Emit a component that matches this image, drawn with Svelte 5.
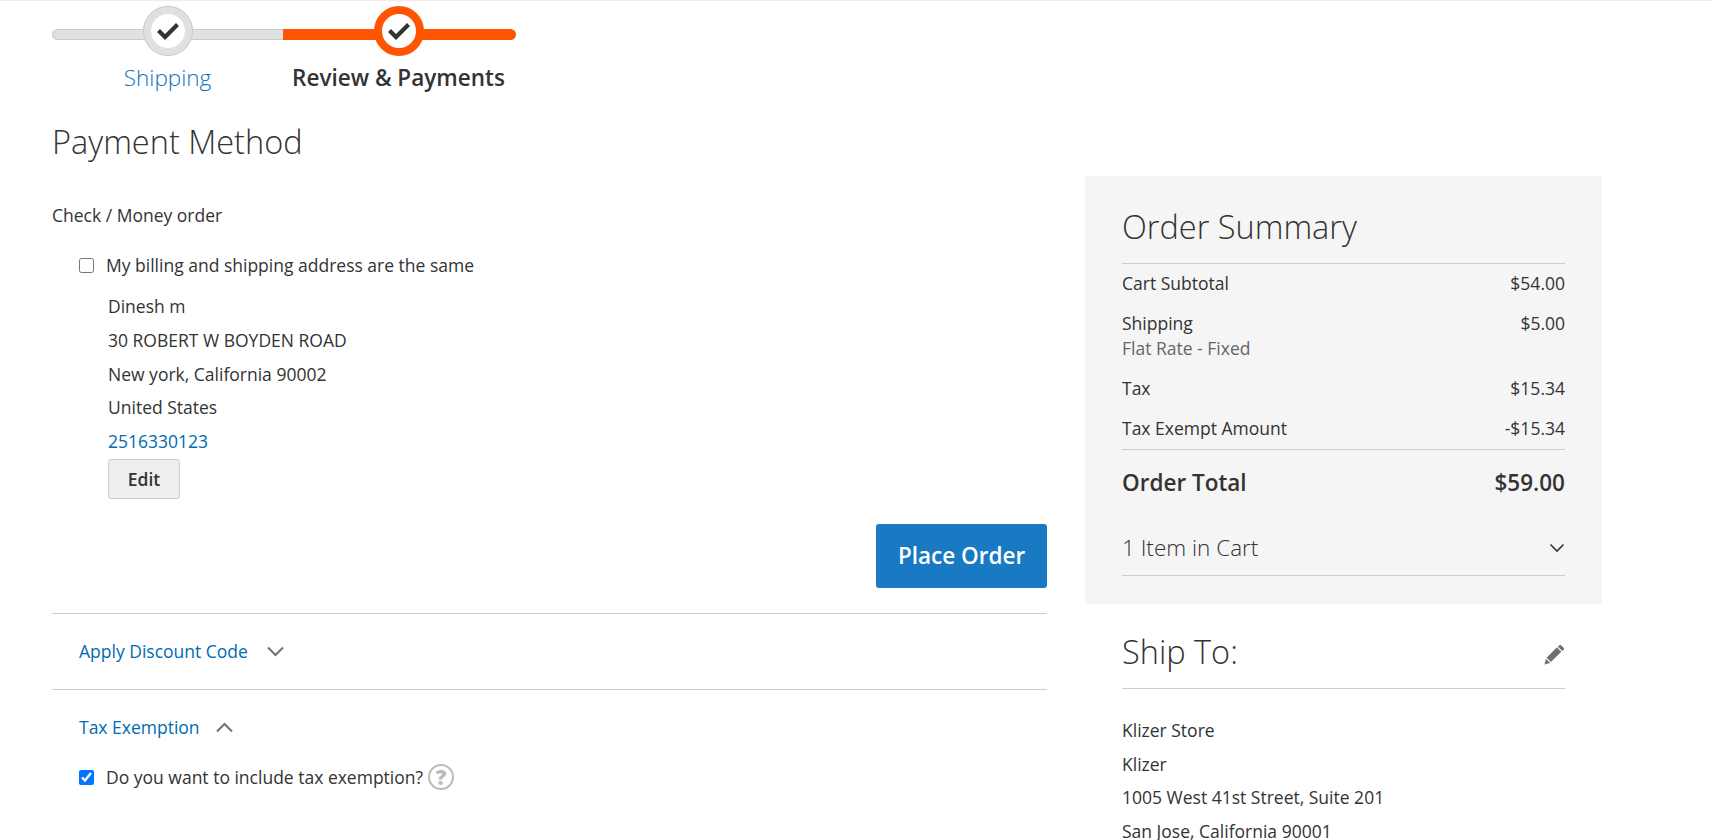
<script>
	const totals = [
		{ label: 'Cart Subtotal', value: '$54.00' },
		{ label: 'Shipping', sub: 'Flat Rate - Fixed', value: '$5.00' },
		{ label: 'Tax', value: '$15.34' },
		{ label: 'Tax Exempt Amount', value: '-$15.34' }
	];
	const billing = ['Dinesh m', '30 ROBERT W BOYDEN ROAD', 'New york, California 90002', 'United States'];
	const shipFrom = ['Klizer Store', 'Klizer', '1005 West 41st Street, Suite 201', 'San Jose, California 90001'];
	const check = 'M0 10 3 7 8 12 19 1 22 4 8 18Z';
</script>

<div class="page">
	<main>
		<ul class="progress">
			<li class="step done">
				<span class="bar"></span>
				<span class="dot"><svg viewBox="0 0 22 19" aria-hidden="true"><path d={check} /></svg></span>
				<a href="#shipping">Shipping</a>
			</li>
			<li class="step active">
				<span class="bar"></span>
				<span class="dot"><svg viewBox="0 0 22 19" aria-hidden="true"><path d={check} /></svg></span>
				<b>Review &amp; Payments</b>
			</li>
		</ul>

		<h1>Payment Method</h1>
		<p class="method">Check / Money order</p>

		<label class="check same">
			<input type="checkbox" />
			My billing and shipping address are the same
		</label>

		<div class="address">
			{#each billing as line}
				<div>{line}</div>
			{/each}
			<div><a href="#tel">2516330123</a></div>
			<button class="edit">Edit</button>
		</div>

		<div class="actions">
			<button class="place">Place Order</button>
		</div>

		<section class="fold discount">
			<a href="#discount">Apply Discount Code</a>
			<svg class="chev" viewBox="0 0 18 11" aria-hidden="true"><path d="M1.5 1.5 9 9l7.5-7.5" /></svg>
		</section>

		<section class="fold tax">
			<a href="#tax">Tax Exemption</a>
			<svg class="chev" viewBox="0 0 18 11" aria-hidden="true"><path d="M1.5 9.5 9 2l7.5 7.5" /></svg>
		</section>

		<label class="check exempt">
			<input type="checkbox" checked />
			Do you want to include tax exemption?
			<span class="help">?</span>
		</label>
	</main>

	<aside>
		<div class="summary">
			<h2>Order Summary</h2>
			<div class="totals">
				{#each totals as row}
					<div class="row">
						<div>
							{row.label}
							{#if row.sub}<div class="sub">{row.sub}</div>{/if}
						</div>
						<div>{row.value}</div>
					</div>
				{/each}
			</div>
			<div class="grand">
				<span>Order Total</span>
				<span>$59.00</span>
			</div>
			<div class="items">
				<span>1 Item in Cart</span>
				<svg viewBox="0 0 16 10" aria-hidden="true"><path d="M1.5 1.5 8 8l6.5-6.5" /></svg>
			</div>
		</div>

		<div class="ship">
			<div class="ship-head">
				<h2>Ship To:</h2>
				<svg class="pencil" viewBox="0 0 20 20" aria-hidden="true">
					<path d="M14.6 1.2a1.2 1.2 0 0 1 1.7 0l2.5 2.5a1.2 1.2 0 0 1 0 1.7l-1.3 1.3-4.2-4.2ZM12.3 3.1l4.2 4.2L6.6 17.2l-4.2-4.2ZM1.8 14l4.1 4.1-5.4 1.4Z" />
				</svg>
			</div>
			<div class="from">
				{#each shipFrom as line}
					<div>{line}</div>
				{/each}
			</div>
		</div>
	</aside>
</div>

<style>
	:global(body) {
		background: #fff;
	}

	.page {
		height: 840px;
		overflow: hidden;
		box-sizing: border-box;
		border-top: 1px solid #fbe6e6;
		padding-left: 52px;
		display: grid;
		grid-template-columns: 995px 517px;
		column-gap: 38px;
		font-family: 'Open Sans', sans-serif;
		font-size: 17.5px;
		color: #333;
	}

	a {
		color: #006bb4;
		text-decoration: none;
	}

	.progress {
		list-style: none;
		margin: 0;
		padding: 0;
		width: 464px;
		display: grid;
		grid-template-columns: 231px 233px;
	}

	.step {
		position: relative;
		height: 99px;
		text-align: center;
		font-size: 22.5px;
	}

	.step a,
	.step b {
		position: absolute;
		top: 60px;
		line-height: 34px;
		white-space: nowrap;
		left: 0;
		right: 0;
	}

	.active b {
		left: -1px;
		right: 1px;
	}

	.step a {
		font-weight: 300;
		color: #1272bd;
	}

	.step b {
		font-weight: 600;
	}

	.bar {
		position: absolute;
		left: 0;
		right: 0;
		top: 28px;
		height: 11px;
		box-sizing: border-box;
		background: #e0e0e0;
		border: 1px solid #ccc;
		border-right: 0;
		border-radius: 6px 0 0 6px;
	}

	.active .bar {
		background: #ff5501;
		border: 0;
		border-radius: 0 6px 6px 0;
	}

	.dot {
		position: absolute;
		left: 116px;
		top: 5px;
		width: 50px;
		height: 50px;
		margin-left: -25px;
		box-sizing: border-box;
		border-radius: 50%;
		background: #fff;
		border: 8px solid #e0e0e0;
		display: flex;
		align-items: center;
		justify-content: center;
	}

	.done .dot {
		outline: 1px solid #ccc;
		outline-offset: -1px;
	}

	.active .dot {
		border-color: #ff5501;
	}

	.dot svg {
		width: 22px;
		height: 19px;
		fill: #333;
	}

	h1,
	h2 {
		font-weight: 300;
		margin: 0;
	}

	h1 {
		font-size: 32.5px;
		line-height: 44px;
		margin-top: 20px;
	}

	.method {
		margin: 40px 0 0;
		line-height: 22px;
	}

	.check {
		display: flex;
		align-items: center;
		padding-left: 27px;
	}

	.check input {
		width: 15px;
		height: 15px;
		margin: 0 12px 0 0;
	}

	.same {
		margin-top: 28px;
		line-height: 22px;
	}

	.address {
		margin: 14px 0 0 56px;
		line-height: 33.8px;
	}

	.edit {
		display: block;
		width: 72px;
		height: 40px;
		background: #eee;
		border: 1px solid #ccc;
		border-radius: 3px;
		color: #333;
		font: 600 17.5px 'Open Sans', sans-serif;
	}

	.actions {
		display: flex;
		justify-content: flex-end;
		margin-top: 25px;
	}

	.place {
		width: 171px;
		height: 64px;
		background: #1979c3;
		border: 0;
		border-radius: 3px;
		color: #fff;
		font: 600 22.5px 'Open Sans', sans-serif;
	}

	.fold {
		display: flex;
		align-items: flex-start;
		box-sizing: border-box;
		padding: 25.5px 0 0 27px;
		border-top: 1px solid #ccc;
		height: 76px;
		line-height: 24.5px;
	}

	.discount {
		margin-top: 25px;
	}

	.tax {
		height: 71.5px;
	}

	.chev {
		width: 19px;
		height: 11px;
		margin: 7px 0 0 18px;
		fill: none;
		stroke: #707070;
		stroke-width: 2;
	}

	.tax .chev {
		margin-left: 15px;
	}

	.exempt {
		margin-top: 2px;
		line-height: 30px;
	}

	.help {
		width: 22px;
		height: 22px;
		margin-left: 5px;
		border: 2px solid #bbb;
		border-radius: 50%;
		color: #bbb;
		font-weight: 800;
		font-size: 21px;
		line-height: 22px;
		text-align: center;
	}

	aside {
		padding-top: 175px;
	}

	.summary {
		background: #f5f5f5;
		padding: 29px 37px 28px;
		height: 428px;
		box-sizing: border-box;
	}

	.summary h2,
	.ship h2 {
		font-size: 32.5px;
		line-height: 44px;
	}

	.totals {
		margin-top: 14px;
		border-top: 1px solid #ccc;
		border-bottom: 1px solid #ccc;
	}

	.row {
		display: flex;
		justify-content: space-between;
		padding: 8px 0;
		line-height: 24.5px;
	}

	.row:first-child {
		padding-top: 6.5px;
	}

	.sub {
		color: #666;
		line-height: 24px;
	}

	.grand {
		display: flex;
		justify-content: space-between;
		margin-top: 17px;
		font-size: 22.5px;
		font-weight: 600;
		line-height: 32px;
	}

	.items {
		display: flex;
		justify-content: space-between;
		align-items: center;
		margin-top: 33px;
		padding-bottom: 11px;
		border-bottom: 1px solid #ccc;
		font-size: 22.5px;
		font-weight: 300;
		line-height: 32px;
	}

	.items svg {
		width: 16px;
		height: 10px;
		fill: none;
		stroke: #333;
		stroke-width: 1.6;
	}

	.ship {
		padding: 26px 37px 0;
	}

	.ship-head {
		display: flex;
		justify-content: space-between;
		align-items: center;
		padding-bottom: 14px;
		border-bottom: 1px solid #ccc;
	}

	.pencil {
		width: 21px;
		height: 21px;
		fill: #707070;
		margin-top: 5px;
	}

	.from {
		margin-top: 25px;
		line-height: 33.5px;
	}
</style>
